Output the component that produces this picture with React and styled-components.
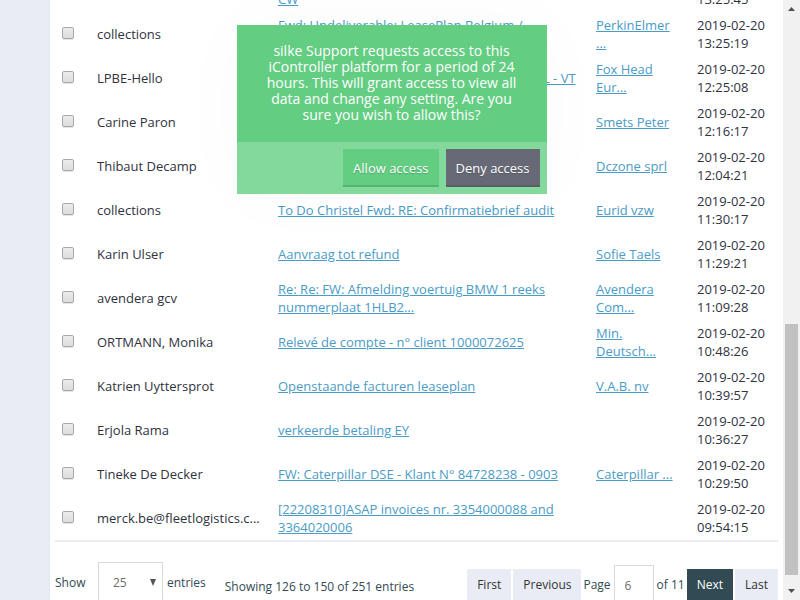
import React from "react";
import styled, { createGlobalStyle } from "styled-components";

const GlobalStyle = createGlobalStyle`
  * { box-sizing: border-box; }
  body {
    margin: 0;
    overflow: hidden;
    background: #fff;
    color: #2f323e;
    font: 13px/18px "Open Sans", "Noto Sans", sans-serif;
  }
`;

const Page = styled.div`
  display: grid;
  grid-template-columns: 50px minmax(0, 1fr) 17px;
  height: 100vh;
  overflow: hidden;
`;

const SideStrip = styled.aside`
  background: #e9ecf5;
  border-right: 1px solid #e3e8ef;
`;

const Content = styled.main`
  min-width: 0;
  padding: 0 5px;
  overflow: hidden;
`;

const MailTable = styled.table`
  width: 100%;
  margin-top: -32px;
  table-layout: fixed;
  border-collapse: separate;
  border-spacing: 0;
  border-bottom: 2px solid #e9edf3;
`;

const Column = styled.col`
  width: ${({ $width }) => $width};
`;

const Cell = styled.td`
  height: 44px;
  padding: 4px ${({ $tight }) => ($tight ? "7px" : "10px")};
  vertical-align: middle;
  white-space: ${({ $nowrap }) => ($nowrap ? "nowrap" : "normal")};
`;

const CheckBox = styled.input`
  display: block;
  appearance: none;
  width: 12px;
  height: 12px;
  margin: 0 0 2px;
  border: 1px solid #a9a9a9;
  border-radius: 2px;
  background: linear-gradient(#ececec, #dcdcdc);
  box-shadow: 0 1px 0 #e6e6e6;

  &:checked { background: #4a9bc6; }
`;

const TextLink = styled.a`
  color: #4a9bc6;
  text-decoration: underline;
`;

const Footer = styled.footer`
  display: flex;
  justify-content: space-between;
  align-items: flex-start;
  padding-top: 20px;
  color: #324a53;
  font-size: 12px;
  white-space: nowrap;
`;

const FooterGroup = styled.div`
  display: flex;
  align-items: center;
`;

const LengthLabel = styled.label`
  display: flex;
  align-items: center;
  gap: 4px;
`;

const LengthWord = styled.span`
  width: 39px;
`;

const SelectFrame = styled.span`
  display: flex;
  align-items: center;
  width: 65px;
  height: 42px;
  padding-right: 5px;
  border: 1px solid #d9d9d9;
`;

const LengthSelect = styled.select`
  flex: 1;
  min-width: 0;
  height: 38px;
  padding: 0 0 0 14px;
  appearance: none;
  border: 0;
  background: transparent;
  color: #6b6b6b;
  font: inherit;
`;

const Summary = styled.span`
  padding: 8px 0 0 19px;
`;

const Pager = styled.nav`
  display: flex;
  align-items: center;
  gap: 2px;
  padding-top: 3px;
`;

const PageButton = styled.button`
  height: 32px;
  padding: 0 10px;
  border: 0;
  background: ${({ $active }) => ($active ? "#324a53" : "#e9ecf5")};
  color: ${({ $active }) => ($active ? "#fff" : "#333")};
  font: inherit;
  font-weight: ${({ $active }) => ($active ? 500 : 400)};
`;

const PageLabel = styled.label`
  display: flex;
  align-items: center;
  gap: 3px;
`;

const PageInput = styled.input`
  width: 40px;
  height: 40px;
  padding: 0 10px;
  border: 1px solid #d9d9d9;
  color: #6b6b6b;
  font: inherit;
`;

const ScrollRail = styled.div`
  display: flex;
  flex-direction: column;
  justify-content: space-between;
  align-items: center;
  background: #f1f1f1;
`;

const ScrollArrow = styled.svg`
  width: 17px;
  height: 17px;
`;

const ScrollTrack = styled.div`
  display: flex;
  flex: 1;
  flex-direction: column;
  justify-content: flex-end;
  padding-bottom: 8px;
`;

const ScrollThumb = styled.div`
  width: 13px;
  height: 45%;
  background: #c1c1c1;
`;

const Overlay = styled.div`
  position: absolute;
  top: 25px;
  left: 0;
  right: 17px;
  display: flex;
  justify-content: center;
  pointer-events: none;
`;

const Dialog = styled.section`
  width: 310px;
  background: #63cd82;
  color: #fff;
  box-shadow: 0 0 80px rgba(0, 0, 0, 0.025);
  pointer-events: auto;
`;

const DialogText = styled.p`
  margin: 0;
  padding: 18px 28px 19px;
  font-size: 14px;
  line-height: 16px;
  text-align: center;
`;

const DialogActions = styled.div`
  display: flex;
  justify-content: flex-end;
  gap: 7px;
  padding: 7px;
  background: #83d99b;
`;

const DialogButton = styled.button`
  height: 38px;
  padding: 2px 10px 0;
  border: 0;
  border-bottom: 2px solid rgba(0, 0, 0, 0.12);
  background: ${({ $deny }) => ($deny ? "#676a76" : "#63cd82")};
  color: #fff;
  font: inherit;
  text-shadow: 0 1px 1px rgba(0, 0, 0, 0.2);
`;

const mails = [
  ["collections", "Fwd: Undeliverable: LeasePlan Belgium / facture CW", "", "13:25:45"],
  ["collections", "Fwd: Undeliverable: LeasePlan Belgium / PerkinElmer", "PerkinElmer ...", "13:25:19"],
  ["LPBE-Hello", "Fwd: LeasePlan Belgium facturen, openst. NL - VT", "Fox Head Eur...", "12:25:08"],
  ["Carine Paron", "", "Smets Peter", "12:16:17"],
  ["Thibaut Decamp", "", "Dczone sprl", "12:04:21"],
  ["collections", "To Do Christel Fwd: RE: Confirmatiebrief audit", "Eurid vzw", "11:30:17"],
  ["Karin Ulser", "Aanvraag tot refund", "Sofie Taels", "11:29:21"],
  ["avendera gcv", "Re: Re: FW: Afmelding voertuig BMW 1 reeks nummerplaat 1HLB2...", "Avendera Com...", "11:09:28"],
  ["ORTMANN, Monika", "Relevé de compte - n° client 1000072625", "Min. Deutsch...", "10:48:26"],
  ["Katrien Uyttersprot", "Openstaande facturen leaseplan", "V.A.B. nv", "10:39:57"],
  ["Erjola Rama", "verkeerde betaling EY", "", "10:36:27"],
  ["Tineke De Decker", "FW: Caterpillar DSE - Klant N° 84728238 - 0903", "Caterpillar ...", "10:29:50"],
  ["merck.be@fleetlogistics.c...", "[22208310]ASAP invoices nr. 3354000088 and 3364020006", "", "09:54:15"],
];

function MailRow({ mail: [sender, subject, client, time] }) {
  return (
    <tr>
      <Cell $tight><CheckBox type="checkbox" aria-label={`Select ${sender} ${time}`} /></Cell>
      <Cell $nowrap>{sender}</Cell>
      <Cell>{subject && <TextLink href="#mail">{subject}</TextLink>}</Cell>
      <Cell>{client && <TextLink href="#client">{client}</TextLink>}</Cell>
      <Cell>2019-02-20 {time}</Cell>
    </tr>
  );
}

export default function App() {
  return (
    <>
      <GlobalStyle />
      <Page>
        <SideStrip />
        <Content>
          <MailTable>
            <colgroup>
              <Column $width="32px" />
              <Column $width="181px" />
              <Column $width="auto" />
              <Column $width="101px" />
              <Column $width="91px" />
            </colgroup>
            <tbody>
              {mails.map((mail) => <MailRow key={mail[3]} mail={mail} />)}
            </tbody>
          </MailTable>
          <Footer>
            <FooterGroup>
              <LengthLabel>
                <LengthWord>Show</LengthWord>
                <SelectFrame>
                  <LengthSelect defaultValue="25">
                    <option>10</option>
                    <option>25</option>
                    <option>50</option>
                  </LengthSelect>
                  <svg width="8" height="8" viewBox="0 0 8 8" aria-hidden="true">
                    <path d="M1 0h6L4 7z" fill="#555" />
                  </svg>
                </SelectFrame>
                entries
              </LengthLabel>
              <Summary>Showing 126 to 150 of 251 entries</Summary>
            </FooterGroup>
            <Pager aria-label="Pages">
              <PageButton>First</PageButton>
              <PageButton>Previous</PageButton>
              <PageLabel>Page <PageInput type="text" defaultValue="6" /> of 11</PageLabel>
              <PageButton $active>Next</PageButton>
              <PageButton>Last</PageButton>
            </Pager>
          </Footer>
        </Content>
        <ScrollRail aria-hidden="true">
          <ScrollArrow viewBox="0 0 17 17"><path d="M5 11h7L8.500 7z" fill="#505050" /></ScrollArrow>
          <ScrollTrack><ScrollThumb /></ScrollTrack>
          <ScrollArrow viewBox="0 0 17 17"><path d="M5 6h7L8.500 10z" fill="#505050" /></ScrollArrow>
        </ScrollRail>
      </Page>
      <Overlay>
        <Dialog role="dialog" aria-label="Access request">
          <DialogText>
            silke Support requests access to this iController platform for a period of 24 hours. This will
            grant access to view all data and change any setting. Are you sure you wish to allow this?
          </DialogText>
          <DialogActions>
            <DialogButton>Allow access</DialogButton>
            <DialogButton $deny>Deny access</DialogButton>
          </DialogActions>
        </Dialog>
      </Overlay>
    </>
  );
}
